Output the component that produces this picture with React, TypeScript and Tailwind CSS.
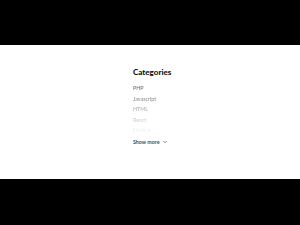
import { ChevronDown } from "lucide-react";

const categories = ["PHP", "Javascript", "HTML", "React", "Node.js"];

export default function App() {
  return (
    <div className="flex h-[225px] w-[300px] flex-col bg-black font-['Lato',sans-serif]">
      <div className="h-[45px] shrink-0" />
      <div className="h-[134px] shrink-0 bg-white pl-[133px] pt-[22px]">
        <h2 className="text-[8px] font-black leading-[11px] text-[#111]">Categories</h2>
        <ul
          className="mt-[5px] text-[5.4px] leading-[10.5px] text-[#666]"
          style={{
            WebkitMaskImage: "linear-gradient(to bottom, black 10%, rgba(0,0,0,0.05) 95%)",
            maskImage: "linear-gradient(to bottom, black 10%, rgba(0,0,0,0.05) 95%)",
          }}
        >
          {categories.map((c) => (
            <li key={c}>{c}</li>
          ))}
        </ul>
        <button
          type="button"
          className="mt-[2px] flex items-center gap-[2px] text-[5.3px] font-bold leading-[8px] text-[#2c5a6b]"
        >
          Show more
          <ChevronDown className="h-[6px] w-[6px]" strokeWidth={2.5} />
        </button>
      </div>
      <div className="flex-1" />
    </div>
  );
}
